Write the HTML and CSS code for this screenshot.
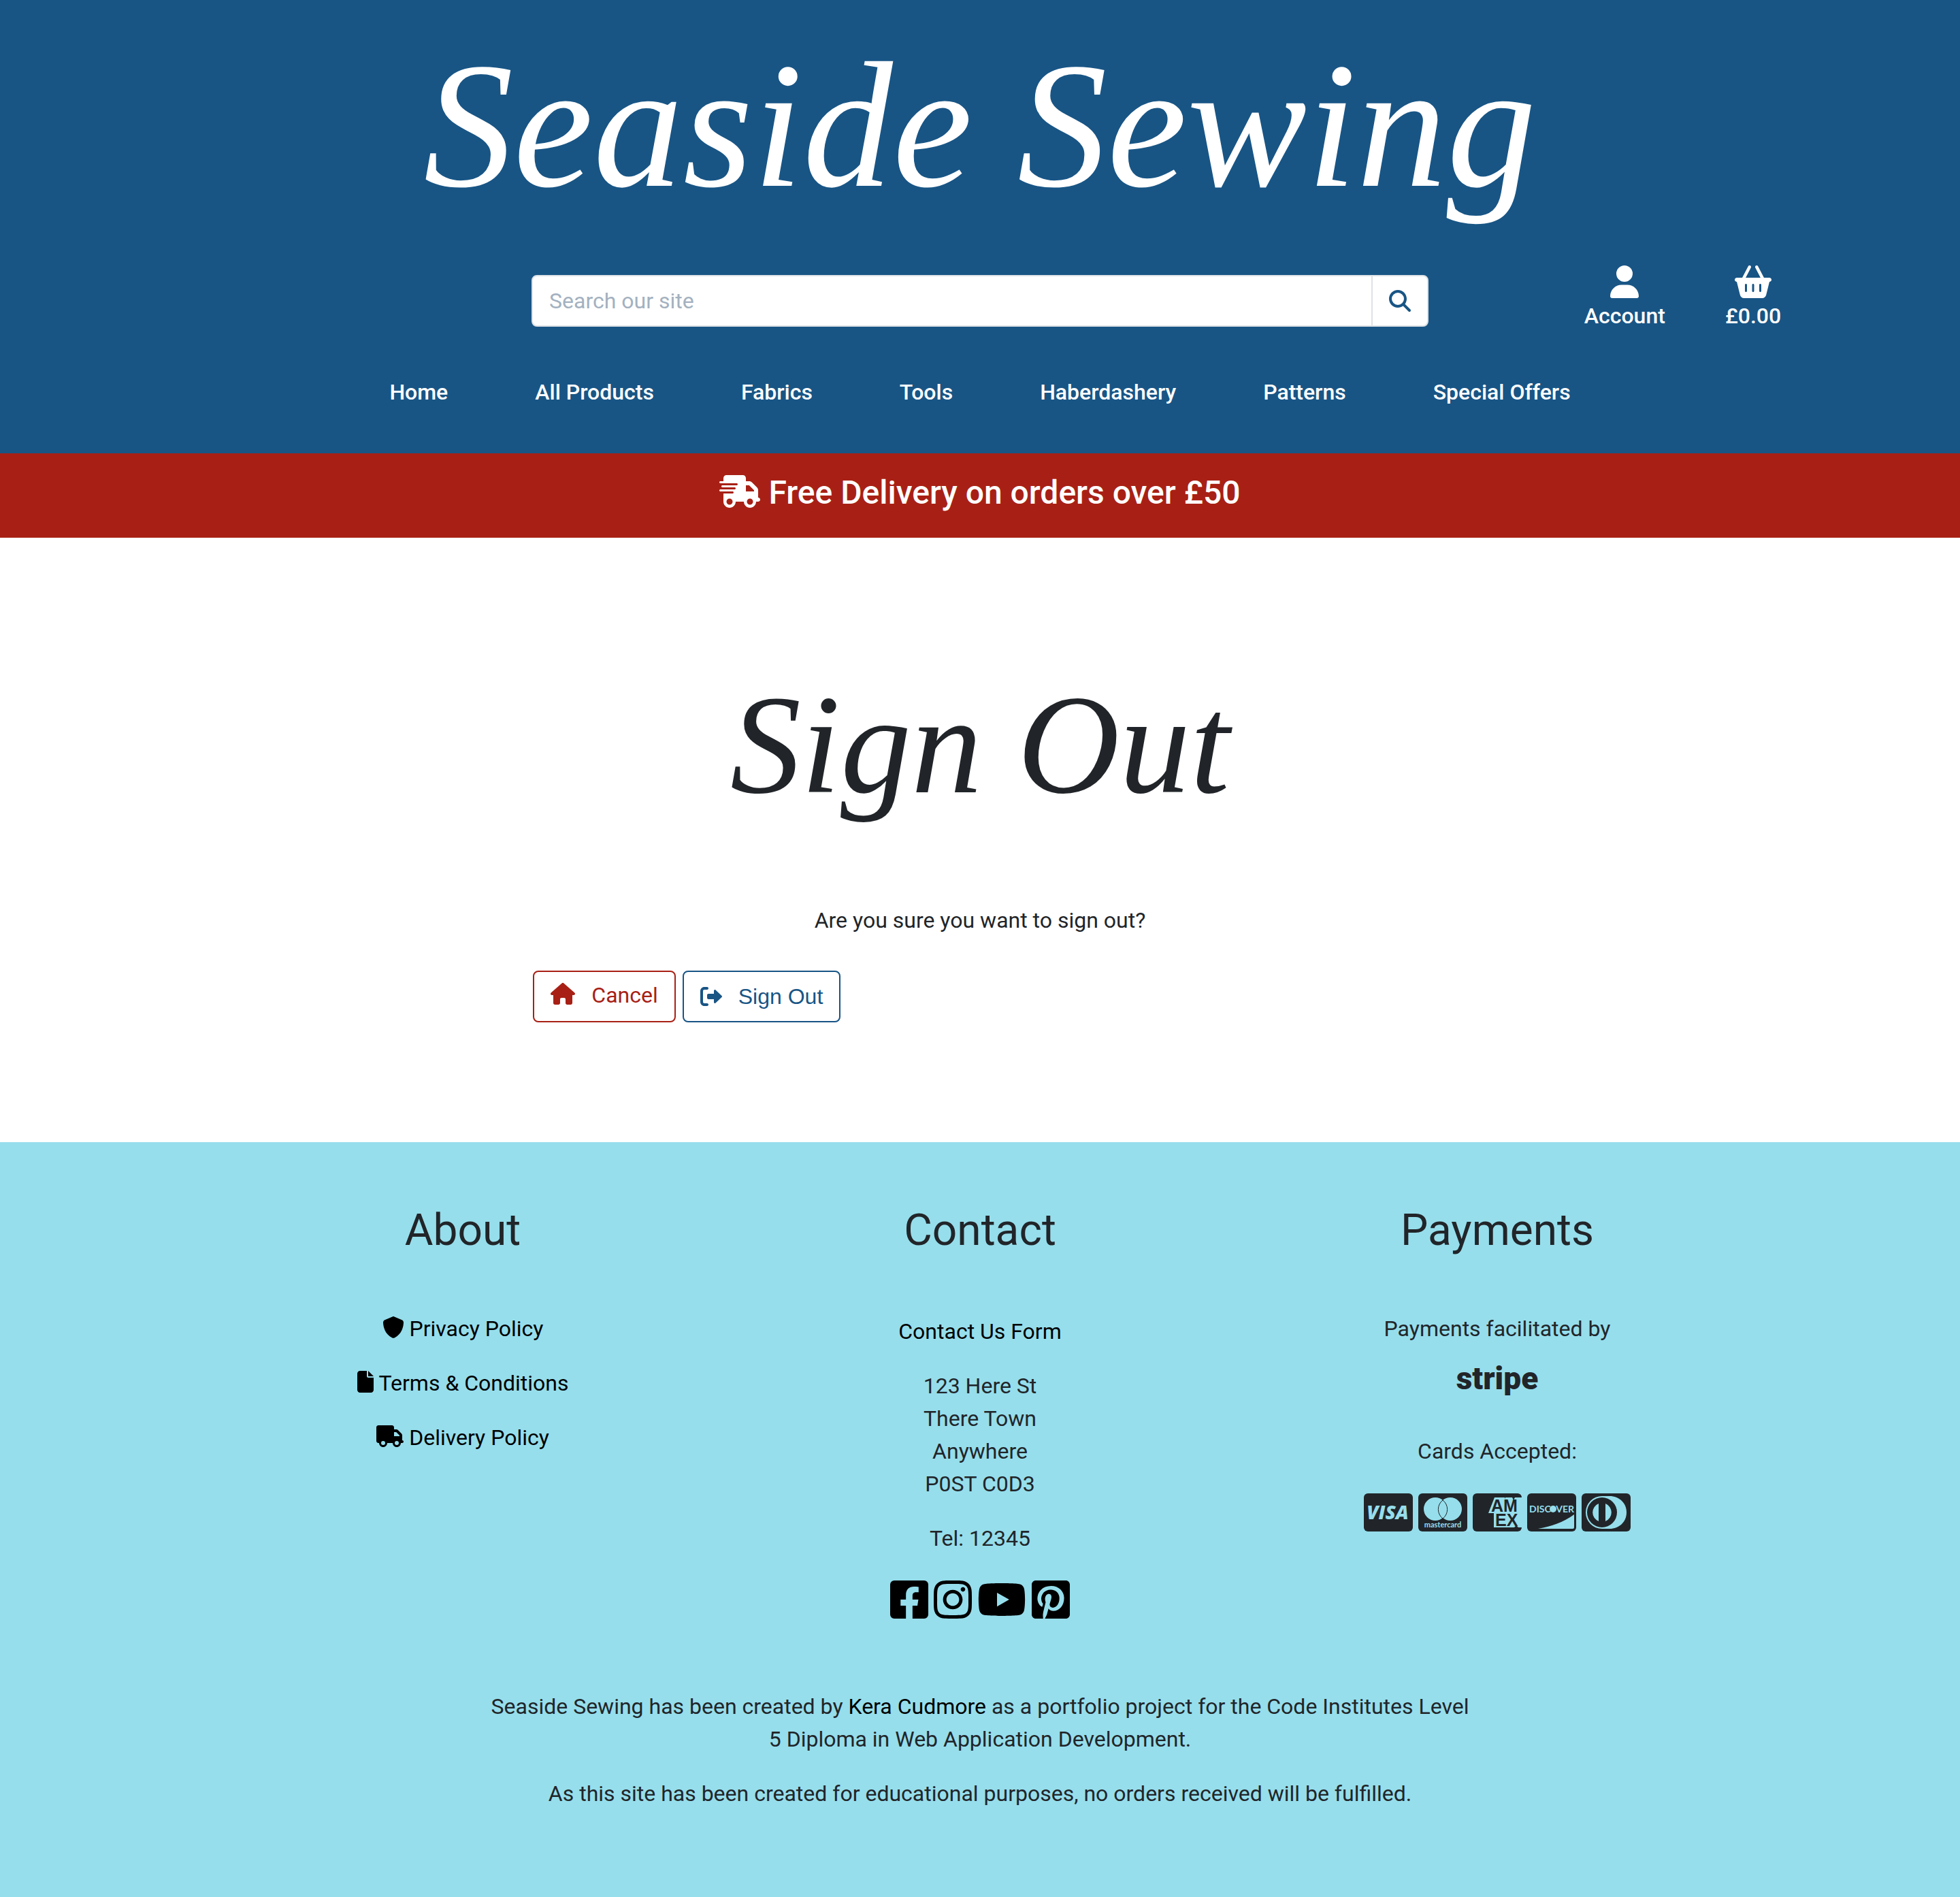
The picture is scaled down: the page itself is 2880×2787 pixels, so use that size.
FILE: index.html
```html
<!DOCTYPE html>
<html lang="en">
<head>
  <meta charset="utf-8">
  <meta name="viewport" content="width=device-width, initial-scale=1">
  <title>Seaside Sewing - Sign Out</title>
  <link rel="stylesheet" href="styles.css">
</head>
<body>
  <header class="site-header">
    <div class="brand"><a href="#">Seaside Sewing</a></div>
    <div class="header-row">
      <form class="search" role="search">
        <input class="search-input" type="search" aria-label="Search our site" placeholder="Search our site">
        <button class="search-button" type="button" aria-label="Search">
          <svg width="32" height="32" viewBox="0 0 512 512"><path d="M416 208c0 45.900-14.900 88.300-40 122.700L502.600 457.400c12.500 12.500 12.500 32.800 0 45.300s-32.800 12.500-45.300 0L330.700 376c-34.400 25.200-76.800 40-122.700 40C93.100 416 0 322.900 0 208S93.100 0 208 0S416 93.100 416 208zM208 352a144 144 0 1 0 0-288 144 144 0 1 0 0 288z"/></svg>
        </button>
      </form>
      <div class="shortcuts">
        <a class="shortcut" href="#">
          <svg width="42" height="48" viewBox="0 0 448 512"><path d="M224 256A128 128 0 1 0 224 0a128 128 0 1 0 0 256zm-45.700 48C79.800 304 0 383.800 0 482.300C0 498.700 13.300 512 29.700 512H418.300c16.400 0 29.700-13.300 29.700-29.700C448 383.800 368.200 304 269.700 304H178.300z"/></svg>
          <span>Account</span>
        </a>
        <a class="shortcut" href="#">
          <svg width="54" height="48" viewBox="0 0 576 512"><path d="M253.300 35.100c6.100-11.800 1.500-26.300-10.200-32.400s-26.300-1.500-32.400 10.200L117.600 192H32c-17.700 0-32 14.300-32 32s14.300 32 32 32L83.900 463.500C91 492 116.600 512 146 512H430c29.400 0 55-20 62.100-48.500L544 256c17.700 0 32-14.300 32-32s-14.300-32-32-32H458.400L365.300 12.900C359.200 1.200 344.700-3.400 332.900 2.700s-16.300 20.600-10.200 32.400L404.300 192H171.700L253.300 35.100zM192 304v96c0 8.800-7.200 16-16 16s-16-7.200-16-16V304c0-8.800 7.200-16 16-16s16 7.200 16 16zm96-16c8.800 0 16 7.200 16 16v96c0 8.800-7.200 16-16 16s-16-7.200-16-16V304c0-8.800 7.200-16 16-16zm128 16v96c0 8.800-7.200 16-16 16s-16-7.200-16-16V304c0-8.800 7.200-16 16-16s16 7.200 16 16z"/></svg>
          <span>£0.00</span>
        </a>
      </div>
    </div>
    <nav class="main-nav" aria-label="Main">
      <a href="#">Home</a>
      <a href="#">All Products</a>
      <a href="#">Fabrics</a>
      <a href="#">Tools</a>
      <a href="#">Haberdashery</a>
      <a href="#">Patterns</a>
      <a href="#">Special Offers</a>
    </nav>
  </header>

  <div class="delivery-banner">
    <svg width="60" height="48" viewBox="0 0 640 512"><path d="M112 0C85.500 0 64 21.500 64 48V96H16c-8.800 0-16 7.200-16 16s7.200 16 16 16H272c8.800 0 16 7.200 16 16s-7.200 16-16 16H48c-8.800 0-16 7.200-16 16s7.200 16 16 16H240c8.800 0 16 7.200 16 16s-7.200 16-16 16H16c-8.800 0-16 7.200-16 16s7.200 16 16 16H208c8.800 0 16 7.200 16 16s-7.200 16-16 16H64V416c0 53 43 96 96 96s96-43 96-96H384c0 53 43 96 96 96s96-43 96-96h32c17.700 0 32-14.300 32-32s-14.300-32-32-32V237.300c0-17-6.700-33.300-18.700-45.300L512 114.700c-12-12-28.300-18.700-45.300-18.700H416V48c0-26.500-21.500-48-48-48H112zM544 237.300V256H416V160h50.700L544 237.300zM160 368a48 48 0 1 1 0 96 48 48 0 1 1 0-96zm272 48a48 48 0 1 1 96 0 48 48 0 1 1-96 0z"/></svg>
    <span>Free Delivery on orders over £50</span>
  </div>

  <main class="sign-out">
    <h1>Sign Out</h1>
    <p>Are you sure you want to sign out?</p>
    <form class="actions">
      <a class="btn btn-cancel" href="#">
        <svg width="36" height="32" viewBox="0 0 576 512"><path d="M575.800 255.500c0 18-15 32.100-32 32.100h-32l.7 160.200c0 2.700-.2 5.400-.5 8.100V472c0 22.100-17.900 40-40 40H456c-1.100 0-2.200 0-3.300-.1c-1.400 .1-2.800 .1-4.200 .1H416 392c-22.100 0-40-17.900-40-40V448 384c0-17.700-14.300-32-32-32H256c-17.700 0-32 14.300-32 32v64 24c0 22.100-17.900 40-40 40H160 128.100c-1.500 0-3-.1-4.500-.2c-1.200 .1-2.400 .2-3.600 .2H104c-22.100 0-40-17.900-40-40V360c0-.9 0-1.900 .1-2.800V287.600H32c-18 0-32-14-32-32.100c0-9 3-17 10-24L266.400 8c7-7 15-8 22-8s15 2 21 7L564.800 231.500c8 7 12 15 11 24z"/></svg>
        <span>Cancel</span>
      </a>
      <button class="btn btn-submit" type="button">
        <svg width="32" height="32" viewBox="0 0 512 512"><path d="M160 96c17.700 0 32-14.300 32-32s-14.300-32-32-32H96C43 32 0 75 0 128V384c0 53 43 96 96 96h64c17.700 0 32-14.300 32-32s-14.300-32-32-32H96c-17.700 0-32-14.300-32-32V128c0-17.700 14.300-32 32-32h64zM504.500 273.400c4.800-4.500 7.500-10.800 7.500-17.400s-2.700-12.900-7.500-17.400l-144-136c-7-6.600-17.200-8.400-26-4.600s-14.500 12.500-14.500 22v72H192c-17.700 0-32 14.300-32 32v64c0 17.700 14.300 32 32 32H320v72c0 9.600 5.700 18.200 14.500 22s19 2 26-4.600l144-136z"/></svg>
        <span>Sign Out</span>
      </button>
    </form>
  </main>

  <footer class="site-footer">
    <div class="footer-columns">
      <section class="footer-column">
        <h2>About</h2>
        <ul class="policy-list">
          <li><a href="#"><svg width="32" height="32" viewBox="0 0 512 512"><path d="M256 0c4.600 0 9.200 1 13.400 2.900L457.700 82.800c22 9.300 38.400 31 38.300 57.200c-.5 99.200-41.300 280.700-213.600 363.200c-16.700 8-36.100 8-52.800 0C57.300 420.700 16.500 239.200 16 140c-.1-26.200 16.300-47.900 38.300-57.200L242.700 2.900C246.800 1 251.400 0 256 0z"/></svg><span>Privacy Policy</span></a></li>
          <li><a href="#"><svg width="24" height="32" viewBox="0 0 384 512"><path d="M0 64C0 28.700 28.700 0 64 0H224V128c0 17.700 14.300 32 32 32H384V448c0 35.300-28.700 64-64 64H64c-35.300 0-64-28.700-64-64V64zm384 64H256V0L384 128z"/></svg><span>Terms &amp; Conditions</span></a></li>
          <li><a href="#"><svg width="40" height="32" viewBox="0 0 640 512"><path d="M48 0C21.500 0 0 21.500 0 48V368c0 26.500 21.500 48 48 48H64c0 53 43 96 96 96s96-43 96-96H384c0 53 43 96 96 96s96-43 96-96h32c17.700 0 32-14.300 32-32s-14.300-32-32-32V288 256 237.300c0-17-6.700-33.300-18.700-45.300L512 114.700c-12-12-28.300-18.700-45.300-18.700H416V48c0-26.500-21.500-48-48-48H48zM416 160h50.700L544 237.300V256H416V160zM112 416a48 48 0 1 1 96 0 48 48 0 1 1-96 0zm368-48a48 48 0 1 1 0 96 48 48 0 1 1 0-96z"/></svg><span>Delivery Policy</span></a></li>
        </ul>
      </section>

      <section class="footer-column">
        <h2>Contact</h2>
        <div class="contact">
          <a href="#">Contact Us Form</a>
          <address>123 Here St<br>There Town<br>Anywhere<br>P0ST C0D3</address>
          <p>Tel: 12345</p>
        </div>
        <div class="icon-row">
          <a href="#" aria-label="Facebook"><svg width="56" height="56" viewBox="0 32 448 448"><path d="M400 32H48A48 48 0 0 0 0 80v352a48 48 0 0 0 48 48h137.250V327.690h-63V256h63v-54.640c0-62.150 37-96.480 93.670-96.480 27.140 0 55.520 4.840 55.520 4.840v61h-31.270c-30.810 0-40.420 19.120-40.420 38.730V256h68.780l-11 71.690h-57.780V480H400a48 48 0 0 0 48-48V80a48 48 0 0 0-48-48z"/></svg></a>
          <a href="#" aria-label="Instagram"><svg width="56" height="56" viewBox="0 32 448 448"><path d="M224.100 141c-63.600 0-114.900 51.300-114.900 114.900s51.300 114.900 114.900 114.900S339 319.500 339 255.900 287.700 141 224.100 141zm0 189.600c-41.100 0-74.700-33.500-74.700-74.700s33.500-74.700 74.700-74.700 74.700 33.500 74.700 74.700-33.600 74.700-74.700 74.700zm146.400-194.300c0 14.900-12 26.800-26.800 26.800-14.900 0-26.800-12-26.800-26.800s12-26.800 26.800-26.800 26.800 12 26.800 26.800zm76.100 27.200c-1.700-35.900-9.900-67.700-36.200-93.900-26.200-26.200-58-34.400-93.900-36.200-37-2.100-147.900-2.100-184.900 0-35.800 1.700-67.600 9.900-93.900 36.100s-34.400 58-36.200 93.900c-2.100 37-2.100 147.900 0 184.900 1.700 35.900 9.900 67.700 36.200 93.900s58 34.400 93.900 36.200c37 2.100 147.900 2.100 184.900 0 35.900-1.700 67.700-9.900 93.900-36.200 26.200-26.200 34.400-58 36.200-93.900 2.100-37 2.100-147.800 0-184.800zM398.800 388c-7.800 19.600-22.900 34.700-42.600 42.600-29.500 11.700-99.500 9-132.100 9s-102.700 2.600-132.100-9c-19.600-7.800-34.700-22.900-42.600-42.600-11.700-29.500-9-99.500-9-132.100s-2.600-102.700 9-132.100c7.800-19.600 22.900-34.700 42.600-42.600 29.500-11.700 99.500-9 132.100-9s102.700-2.600 132.100 9c19.600 7.800 34.700 22.900 42.600 42.600 11.700 29.500 9 99.500 9 132.100s2.700 102.700-9 132.100z"/></svg></a>
          <a href="#" aria-label="YouTube"><svg width="72" height="56" viewBox="0 32 576 448"><path d="M549.655 124.083c-6.281-23.650-24.787-42.276-48.284-48.597C458.781 64 288 64 288 64S117.220 64 74.629 75.486c-23.497 6.322-42.003 24.947-48.284 48.597-11.412 42.867-11.412 132.305-11.412 132.305s0 89.438 11.412 132.305c6.281 23.650 24.787 41.500 48.284 47.821C117.220 448 288 448 288 448s170.780 0 213.371-11.486c23.497-6.321 42.003-24.171 48.284-47.821 11.412-42.867 11.412-132.305 11.412-132.305s0-89.438-11.412-132.305zm-317.510 213.508V175.185l142.739 81.205-142.739 81.201z"/></svg></a>
          <a href="#" aria-label="Pinterest"><svg width="56" height="56" viewBox="0 32 448 448"><path d="M448 80v352c0 26.500-21.500 48-48 48H154.400c9.800-16.400 22.400-40 27.400-59.300 3-11.500 15.300-58.400 15.300-58.400 8 15.300 31.400 28.200 56.300 28.200 74.100 0 127.400-68.100 127.400-152.700 0-81.100-66.200-141.800-151.400-141.800-106 0-162.200 71.100-162.200 148.600 0 36 19.200 80.800 49.800 95.100 4.700 2.200 7.100 1.200 8.200-3.300.8-3.400 5-20.100 6.800-27.800.6-2.500.3-4.600-1.700-7-10.100-12.300-18.300-34.900-18.300-56 0-54.200 41-106.600 110.900-106.600 60.300 0 102.600 41.100 102.600 99.900 0 66.400-33.500 112.400-77.200 112.400-24.100 0-42.100-19.900-36.400-44.400 6.900-29.200 20.300-60.700 20.300-81.800 0-53-75.500-45.700-75.500 25 0 21.700 7.300 36.500 7.300 36.500-31.400 132.800-36.100 134.500-29.600 192.600l2.200.8H48c-26.500 0-48-21.500-48-48V80c0-26.500 21.500-48 48-48h352c26.500 0 48 21.500 48 48z"/></svg></a>
        </div>
      </section>

      <section class="footer-column">
        <h2>Payments</h2>
        <div class="payments">
          <p>Payments facilitated by</p>
          <svg class="stripe" width="140" height="60" viewBox="0 0 140 60" role="img" aria-label="Stripe"><text x="70" y="45" text-anchor="middle" font-size="46">stripe</text></svg>
          <p>Cards Accepted:</p>
        </div>
        <div class="icon-row">
          <svg width="72" height="56" viewBox="0 0 72 56" role="img" aria-label="Visa"><rect width="72" height="56" rx="6"/><text class="cut card-visa" x="35" y="38" text-anchor="middle" font-size="28">VISA</text></svg>
          <svg width="72" height="56" viewBox="0 0 72 56" role="img" aria-label="Mastercard"><rect width="72" height="56" rx="6"/><circle class="cut" cx="25" cy="23" r="17"/><circle class="cut" cx="47" cy="23" r="17"/><path class="line" d="M36 10a17 17 0 0 1 0 27a17 17 0 0 1 0-27z"/><text class="cut card-name" x="36" y="50" text-anchor="middle" font-size="11">mastercard</text></svg>
          <svg width="72" height="56" viewBox="0 0 72 56" role="img" aria-label="American Express"><rect width="72" height="56" rx="6"/><path class="cut" d="M32 6h15l1 2V6h10l2 4 2-4h10v44h-5l-3-3-3 3H31V29h-8z"/><text class="card-amex" x="27" y="27" font-size="25">AM</text><text class="card-amex" x="33" y="48" font-size="25">EX</text></svg>
          <svg width="72" height="56" viewBox="0 0 72 56" role="img" aria-label="Discover"><rect width="72" height="56" rx="6"/><text class="cut card-name" x="3" y="28" font-size="14">DISC</text><circle class="cut" cx="38" cy="23" r="5"/><text class="cut card-name" x="69" y="28" text-anchor="end" font-size="14">VER</text><path class="cut" d="M69 31v19a2 2 0 0 1-2 2H16C38 48 56 41 69 31z"/></svg>
          <svg width="72" height="56" viewBox="0 0 72 56" role="img" aria-label="Diners Club"><rect width="72" height="56" rx="6"/><path class="cut" d="M30 4h11c14 0 25 10 25 24S55 52 41 52H30a24 24 0 0 1 0-48z"/><circle cx="30" cy="28" r="22"/><path class="cut" d="M25 15a14 14 0 0 0 0 26zM35 15a14 14 0 0 1 0 26z"/></svg>
        </div>
      </section>
    </div>

    <div class="footer-notes">
      <p>Seaside Sewing has been created by <a href="#">Kera Cudmore</a> as a portfolio project for the Code Institutes Level 5 Diploma in Web Application Development.</p>
      <p>As this site has been created for educational purposes, no orders received will be fulfilled.</p>
    </div>
  </footer>
</body>
</html>
```
FILE: styles.css
```css
:root {
  --blue: #185585;
  --red: #a82015;
  --aqua: #96deec;
  --ink: #212529;
}

* {
  box-sizing: border-box;
}

body {
  margin: 0;
  background: #fff;
  color: var(--ink);
  font-family: Roboto, "Noto Sans", sans-serif;
  font-size: 32px;
  line-height: 48px;
}

a {
  color: inherit;
  text-decoration: none;
}

h1, h2, p, ul {
  margin: 0;
}

svg {
  display: block;
  flex: none;
  fill: currentColor;
}

/* Header */

.site-header {
  padding-bottom: 66px;
  background: var(--blue);
  color: #fff;
  font-weight: 500;
}

.brand {
  font-family: "Liberation Serif", serif;
  font-style: italic;
  font-weight: 400;
  font-size: 264px;
  line-height: 368px;
  text-align: center;
}

.header-row {
  display: grid;
  grid-template-columns: 1fr 2fr 1fr;
  align-items: start;
  margin-top: 22px;
  padding: 0 122px;
}

.search {
  grid-column: 2;
  display: flex;
  height: 76px;
  margin-top: 14px;
  overflow: hidden;
  border: 2px solid #dee2e6;
  border-radius: 8px;
  background: #fff;
}

.search-input {
  flex: 1;
  min-width: 0;
  padding: 0 24px;
  border: 0;
  background: none;
  color: var(--ink);
  font: inherit;
  font-weight: 400;
}

.search-input::placeholder {
  color: #a3b1bf;
  opacity: 1;
}

.search-button {
  display: grid;
  place-items: center;
  width: 82px;
  border: 0;
  border-left: 2px solid #dee2e6;
  background: none;
  color: var(--blue);
}

.shortcuts {
  display: flex;
  justify-content: center;
  gap: 88px;
  padding-left: 88px;
}

.shortcut {
  display: flex;
  flex-direction: column;
  gap: 2px;
  align-items: center;
}

.main-nav {
  display: flex;
  flex-wrap: wrap;
  justify-content: center;
  gap: 0 128px;
  margin-top: 64px;
}

.delivery-banner {
  display: flex;
  justify-content: center;
  align-items: flex-start;
  gap: 12px;
  padding: 22px 0 30px;
  background: var(--red);
  color: #fff;
  font-weight: 500;
  font-size: 48px;
  line-height: 72px;
}

.delivery-banner svg {
  margin-top: 10px;
}

/* Sign out */

.sign-out {
  padding: 184px 27.2% 176px;
}

.sign-out h1 {
  font-family: "Liberation Serif", serif;
  font-style: italic;
  font-weight: 400;
  font-size: 208px;
  line-height: 240px;
  text-align: center;
}

.sign-out p {
  margin-top: 114px;
  text-align: center;
}

.actions {
  display: flex;
  gap: 10px;
  margin-top: 50px;
}

.btn {
  display: flex;
  gap: 24px;
  height: 76px;
  padding: 0 24px;
  border: 2px solid currentColor;
  border-radius: 8px;
  background: #fff;
}

.btn-cancel {
  align-items: flex-start;
  padding-top: 10px;
  color: var(--red);
}

.btn-cancel svg {
  margin-top: 6px;
}

.btn-submit {
  align-items: center;
  color: var(--blue);
  font-family: "Liberation Sans", sans-serif;
  font-size: 32px;
}

/* Footer */

.site-footer {
  padding: 92px 0 128px;
  background: var(--aqua);
  text-align: center;
}

.site-footer a {
  color: #000;
}

.footer-columns {
  display: grid;
  grid-template-columns: repeat(3, 1fr);
  padding: 0 300px;
}

.footer-column h2 {
  margin-bottom: 82px;
  font-weight: 400;
  font-size: 64px;
  line-height: 76px;
}

.policy-list,
.contact {
  display: flex;
  flex-direction: column;
  gap: 32px;
  padding: 0;
  list-style: none;
}

.contact {
  padding-top: 4px;
}

.policy-list a {
  display: flex;
  justify-content: center;
  gap: 8px;
}

.policy-list svg {
  margin-top: 6px;
}

.contact address {
  font-style: normal;
}

.icon-row {
  display: flex;
  justify-content: center;
  gap: 8px;
  margin-top: 38px;
}

.stripe {
  margin: 20px auto 52px;
  font-family: Roboto, sans-serif;
  font-weight: 900;
}

.cut {
  fill: var(--aqua);
}

.line {
  fill: none;
  stroke: var(--ink);
  stroke-width: 1;
}

.card-visa {
  font-family: "Open Sans", sans-serif;
  font-style: italic;
  font-weight: 800;
}

.card-name {
  font-family: Lato, sans-serif;
  font-weight: 700;
}

.card-amex {
  font-family: "Liberation Sans", sans-serif;
  font-weight: 700;
}

.footer-notes {
  display: flex;
  flex-direction: column;
  gap: 32px;
  margin-top: 105px;
  padding: 0 25%;
}
```
